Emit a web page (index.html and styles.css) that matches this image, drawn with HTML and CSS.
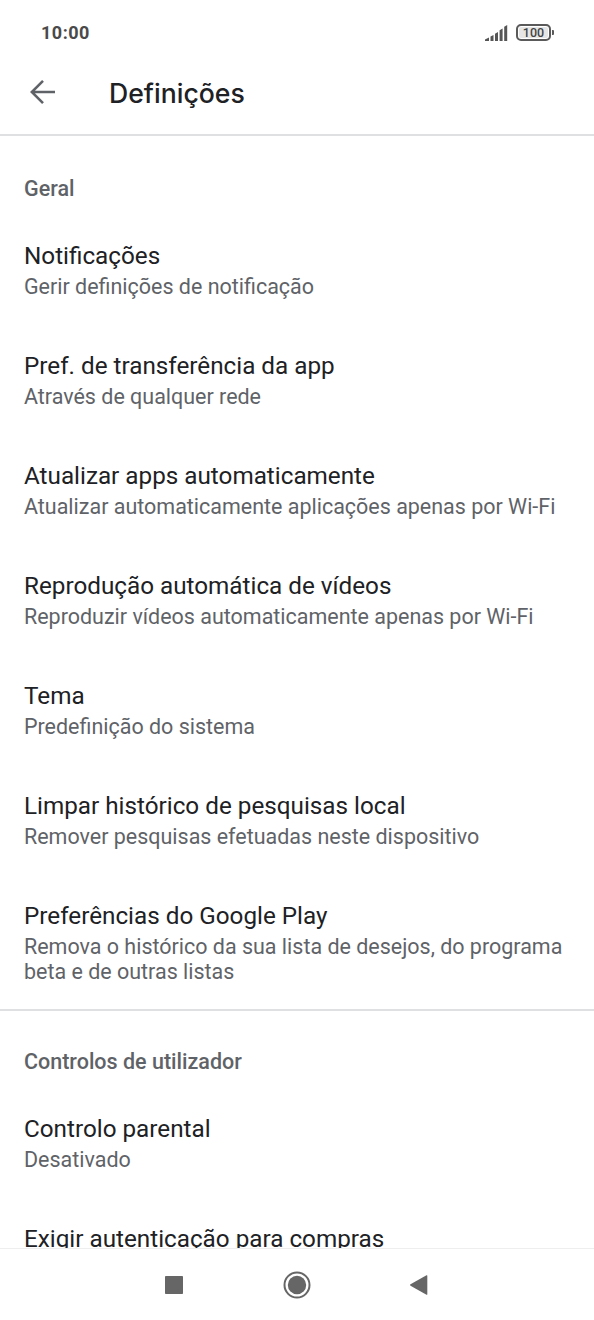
FILE: index.html
```html
<!DOCTYPE html>
<html lang="pt">
<head>
<meta charset="utf-8">
<title>Definições</title>
<link rel="stylesheet" href="styles.css">
</head>
<body>
<div class="screen">
  <header class="status">
    <span class="clock">10:00</span>
    <div class="indicators">
      <svg class="signal" width="23" height="18" viewBox="0 0 23 18"><path d="M0 17v-1.500l4-2V17zM5.500 12.600l3-1.600V17h-3zM10 9.800l3-1.800v9h-3zM14.600 6.300l3-1.800V17h-3zM19.200 2.800l3-1.800v16h-3z"/></svg>
      <div class="battery"><span class="level">100</span><span class="nub"></span></div>
    </div>
  </header>
  <div class="appbar">
    <svg class="back" width="26" height="26" viewBox="0 0 26 26"><path d="M25 13H2.500M13 1.800L1.800 13L13 24.200"/></svg>
    <h1 class="title">Definições</h1>
  </div>
  <main class="content">
    <section class="group">
      <h2 class="heading">Geral</h2>
      <div class="item"><div class="name">Notificações</div><div class="summary">Gerir definições de notificação</div></div>
      <div class="item"><div class="name">Pref. de transferência da app</div><div class="summary">Através de qualquer rede</div></div>
      <div class="item"><div class="name">Atualizar apps automaticamente</div><div class="summary">Atualizar automaticamente aplicações apenas por Wi-Fi</div></div>
      <div class="item"><div class="name">Reprodução automática de vídeos</div><div class="summary">Reproduzir vídeos automaticamente apenas por Wi-Fi</div></div>
      <div class="item"><div class="name">Tema</div><div class="summary">Predefinição do sistema</div></div>
      <div class="item"><div class="name">Limpar histórico de pesquisas local</div><div class="summary">Remover pesquisas efetuadas neste dispositivo</div></div>
      <div class="item"><div class="name">Preferências do Google Play</div><div class="summary">Remova o histórico da sua lista de desejos, do programa<br>beta e de outras listas</div></div>
    </section>
    <section class="group">
      <h2 class="heading">Controlos de utilizador</h2>
      <div class="item"><div class="name">Controlo parental</div><div class="summary">Desativado</div></div>
      <div class="item"><div class="name">Exigir autenticação para compras</div></div>
    </section>
  </main>
  <nav class="navbar">
    <svg width="18" height="18" viewBox="0 0 18 18"><rect width="18" height="18" rx="0.800"/></svg>
    <svg width="28" height="28" viewBox="0 0 28 28"><circle class="ring" cx="14" cy="14" r="12.500"/><circle cx="14" cy="14" r="9.200"/></svg>
    <svg width="18" height="20" viewBox="0 0 18 20"><path d="M0.500 9.300L16.500 0.300q0.800-.3.800.5v18.400q0 .8-.8.500L0.500 10.700q-.8-.7 0-1.400z"/></svg>
  </nav>
</div>
</body>
</html>
```
FILE: styles.css
```css
* { box-sizing: border-box; }
body { margin: 0; background: #fff; font-family: Roboto, "Liberation Sans", sans-serif; color: #202124; }
.screen { width: 594px; height: 1320px; display: flex; flex-direction: column; overflow: hidden; }
.status { height: 49px; flex: none; padding: 16px 40px 0 41px; display: flex; justify-content: space-between; align-items: flex-start; }
.clock { font-size: 18px; line-height: 34px; font-weight: 700; letter-spacing: 0.5px; color: #4a4a4a; }
.indicators { display: flex; align-items: center; gap: 8px; height: 33px; }
.signal { fill: #555; }
.battery { display: flex; align-items: center; gap: 1px; }
.level { width: 35px; height: 17px; border: 2px solid #5a5a5a; border-radius: 5px; background: #e6e6e6; box-shadow: inset 0 0 0 1px #fff; font-size: 12.500px; line-height: 14px; font-weight: 500; text-align: center; color: #444; }
.nub { width: 2px; height: 5px; border-radius: 0 1px 1px 0; background: #5a5a5a; }
.appbar { height: 87px; flex: none; border-bottom: 2px solid #dfe0e2; display: flex; align-items: center; padding: 1px 30px 0; gap: 53px; }
.back { fill: none; stroke: #5f6368; stroke-width: 2.6; }
.title { margin: 0; padding-top: 1px; font-family: Inter, Roboto, sans-serif; font-size: 26.600px; font-weight: 500; line-height: 36px; }
.content { flex: 1; min-height: 0; overflow: hidden; }
.group { padding-top: 40px; }
.group + .group { border-top: 2px solid #dfe0e2; padding-top: 38px; }
.heading { margin: 0 24px 27px; font-size: 21.500px; line-height: 26px; font-weight: 500; color: #5f6368; }
.item { padding: 11px 24px 25px; min-height: 110px; }
.name { font-size: 24.250px; line-height: 32px; padding-bottom: 2px; white-space: nowrap; }
.summary { font-size: 21.480px; line-height: 25px; color: #5f6368; white-space: nowrap; }
.navbar { flex: none; height: 72px; border-top: 1px solid #eee; display: flex; align-items: center; justify-content: space-between; padding: 0 166px 0 165px; fill: #666; }
.ring { fill: none; stroke: #666; stroke-width: 2; }
```
